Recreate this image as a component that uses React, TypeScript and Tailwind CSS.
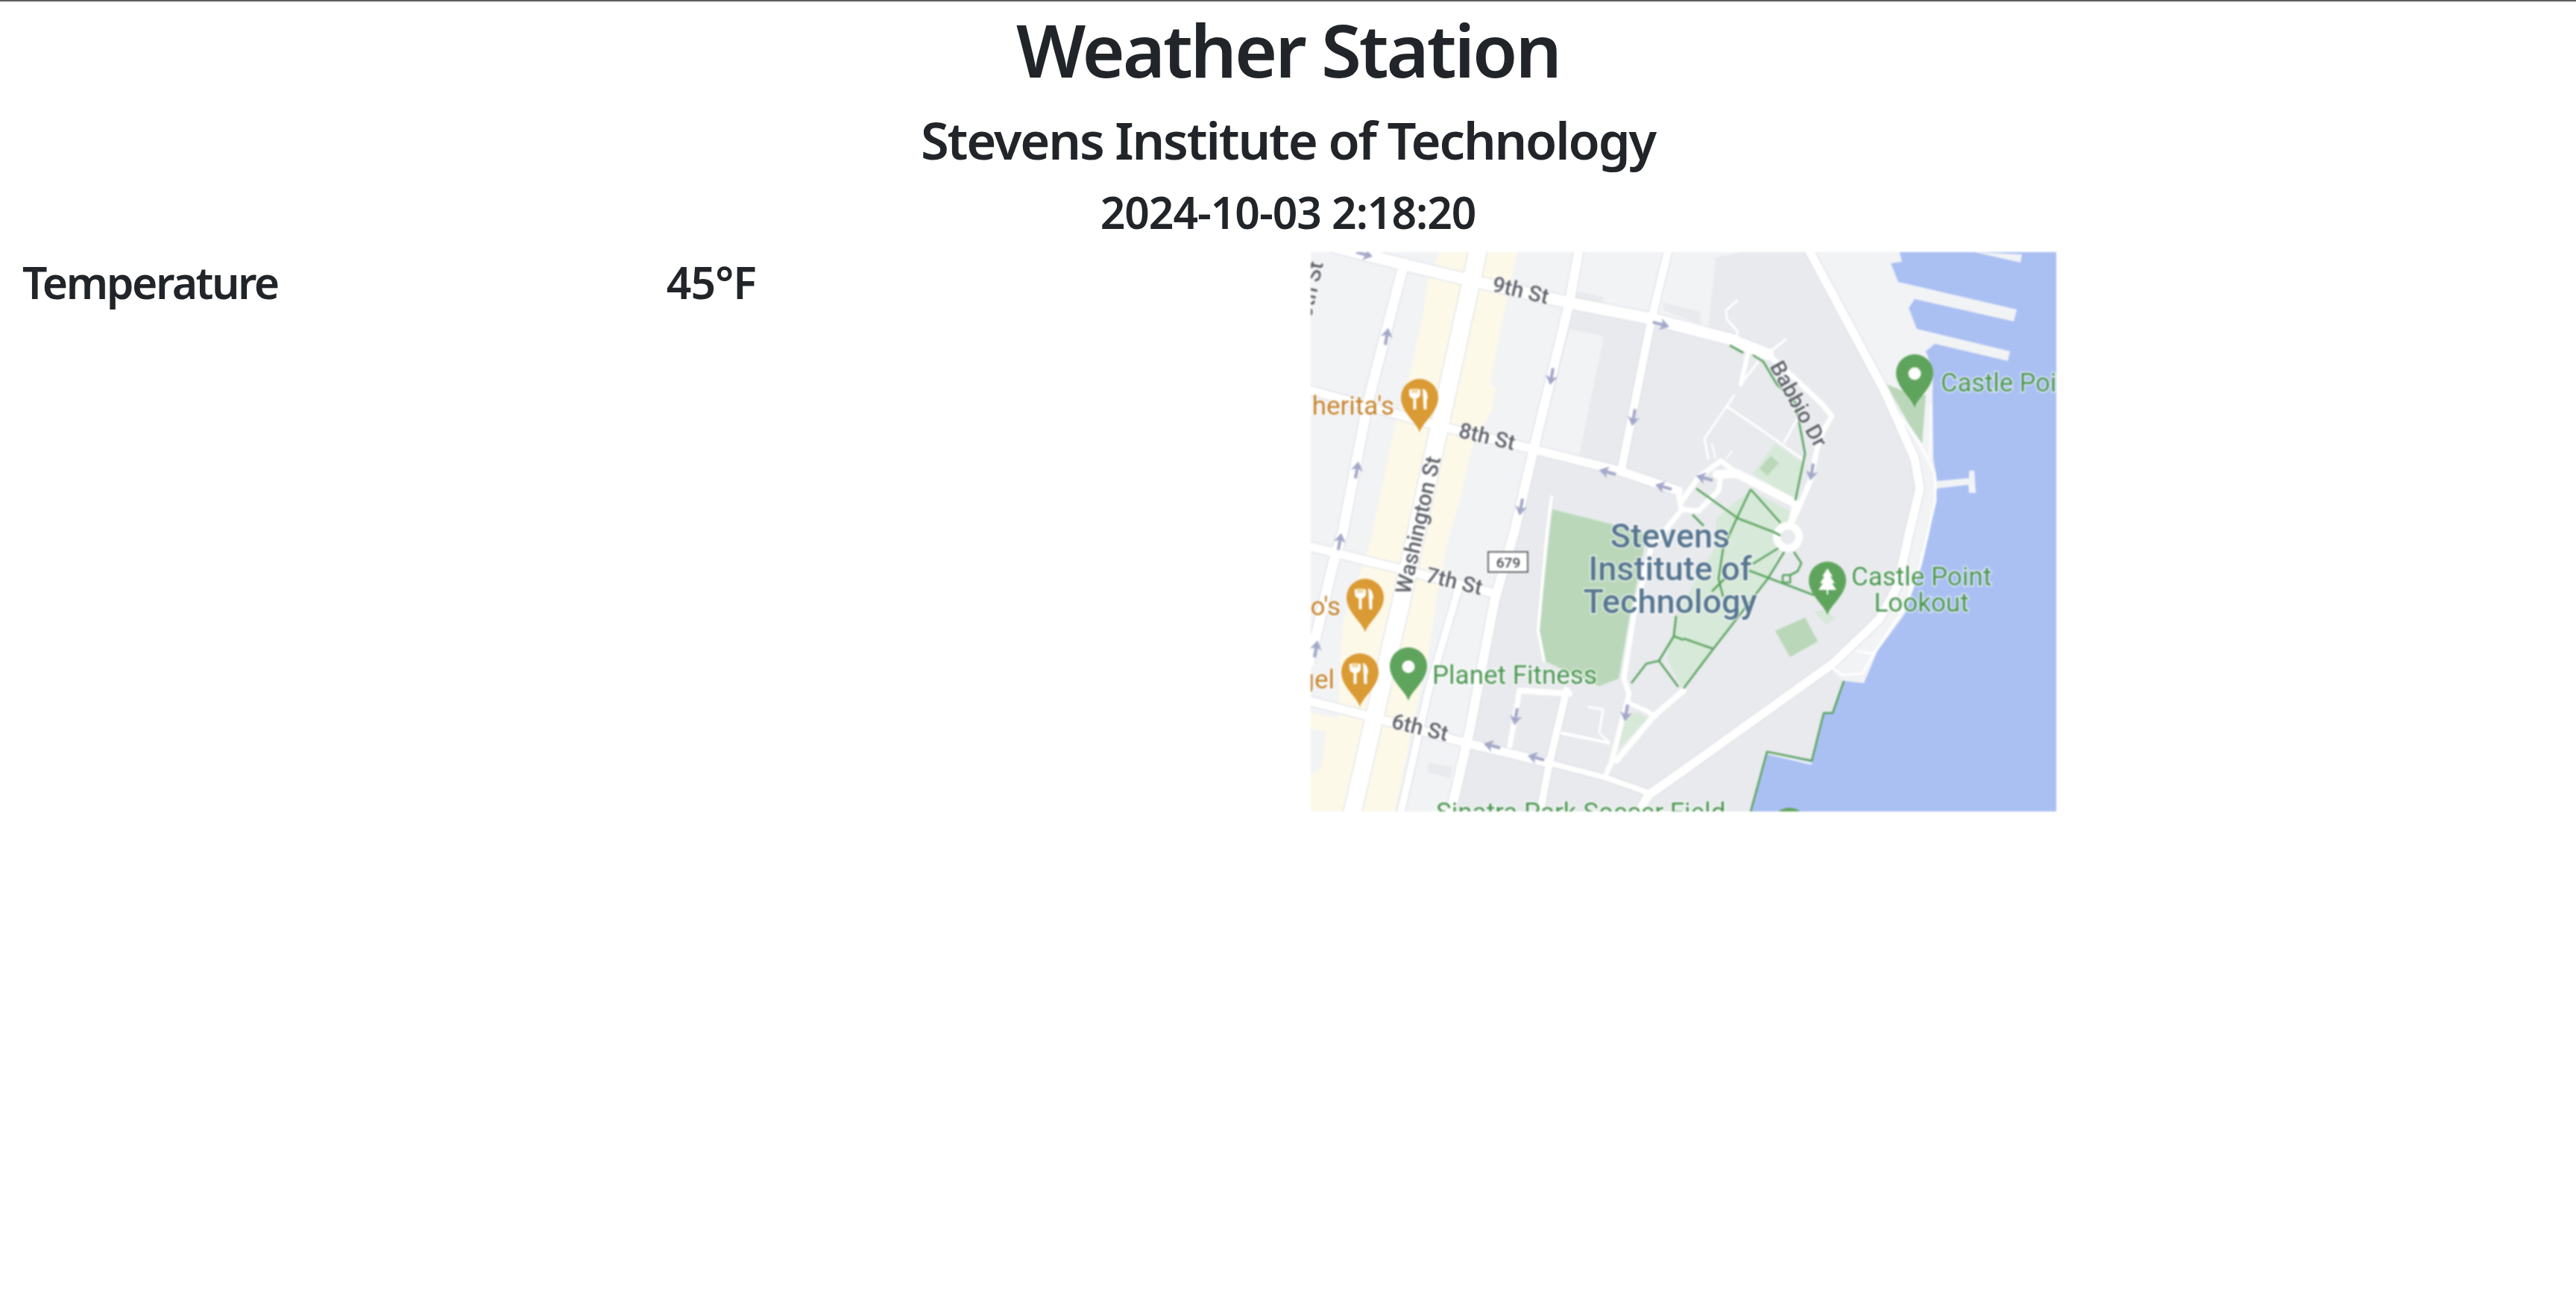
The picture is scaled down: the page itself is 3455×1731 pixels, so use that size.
const P = (pts: number[][]) => pts.map((p) => p.join(",")).join(" ");

const majorRoads: { w: number; p: number[][] }[] = [
  { w: 16, p: [[20, -10], [127, 17], [210, 37], [347, 68], [460, 90], [563, 117], [613, 137]] },
  { w: 24, p: [[225, -5], [120, 475], [55, 755]] },
  { w: 14, p: [[125, 15], [77, 200], [43, 375], [30, 418], [7, 515], [-2, 550]] },
  { w: 13, p: [[360, -5], [347, 67], [300, 260], [273, 375], [247, 465], [213, 642], [187, 755]] },
  { w: 11, p: [[480, -5], [457, 90], [417, 290]] },
  { w: 12, p: [[-5, 184], [160, 230], [293, 263], [413, 293], [493, 320]] },
  { w: 12, p: [[-5, 394], [120, 425], [247, 458]] },
  { w: 10, p: [[197, 455], [157, 592], [120, 755]] },
  { w: 12, p: [[-5, 601], [77, 622], [207, 658], [320, 685]] },
  { w: 8, p: [[320, 685], [397, 705], [453, 725]] },
  { w: 10, p: [[343, 588], [320, 685], [307, 755]] },
  { w: 12, p: [[667, -5], [770, 187], [810, 277], [817, 317], [803, 375], [787, 448], [763, 492], [700, 552], [500, 695], [453, 728], [438, 755]] },
];

const minorRoads: { w: number; p: number[][] }[] = [
  { w: 3, p: [[770, 192], [817, 257], [837, 297], [838, 333], [828, 375], [817, 422], [793, 482], [757, 535], [740, 565], [713, 567], [700, 558]] },
  { w: 3, p: [[733, 535], [753, 538]] },
  { w: 8, p: [[280, 588], [347, 592]] },
  { w: 7, p: [[280, 588], [267, 662]] },
  { w: 4, p: [[337, 645], [400, 658]] },
  { w: 3, p: [[373, 610], [392, 613], [387, 645], [400, 657]] },
  { w: 7, p: [[498, 345], [457, 395], [433, 488], [420, 572], [427, 592], [403, 685], [397, 698]] },
  { w: 8, p: [[500, 588], [460, 622], [410, 682]] },
  { w: 6, p: [[427, 605], [450, 615], [462, 623]] },
  { w: 4, p: [[323, 328], [317, 375], [305, 508], [313, 548]] },
  { w: 7, p: [[613, 137], [650, 170], [685, 203], [699, 220], [687, 240], [680, 260], [670, 307], [657, 337], [643, 367]] },
  { w: 3, p: [[637, 117], [617, 133]] },
  { w: 6, p: [[587, 133], [577, 177]] },
  { w: 3, p: [[577, 177], [600, 147]] },
  { w: 3, p: [[572, 65], [557, 78], [558, 90], [573, 107], [570, 115]] },
  { w: 3, p: [[568, 192], [528, 250], [533, 277]] },
  { w: 3, p: [[558, 207], [607, 240], [660, 278]] },
  { w: 3, p: [[653, 223], [635, 255]] },
  { w: 2, p: [[538, 257], [543, 277]] },
  { w: 2, p: [[565, 267], [557, 277]] },
  { w: 7, p: [[493, 322], [497, 335], [520, 302], [550, 280], [572, 297]] },
  { w: 7, p: [[550, 300], [547, 320], [520, 347], [497, 345], [493, 325]] },
  { w: 12, p: [[545, 298], [572, 297], [650, 337]] },
];

const footpaths: number[][][] = [
  [[562, 125], [580, 135]],
  [[593, 138], [607, 147], [625, 177], [650, 202], [663, 270], [650, 333]],
  [[517, 317], [573, 357], [620, 375], [630, 380]],
  [[590, 318], [630, 363]],
  [[590, 318], [570, 360], [553, 398], [547, 438], [553, 462]],
  [[512, 352], [527, 367]],
  [[627, 397], [593, 418]],
  [[635, 402], [613, 438], [540, 532], [500, 585]],
  [[648, 402], [658, 417], [653, 428], [643, 433]],
  [[588, 427], [675, 460]],
  [[633, 433], [643, 433], [643, 443], [633, 443], [633, 433]],
  [[500, 518], [540, 532]],
  [[538, 455], [555, 438]],
  [[490, 488], [487, 515], [467, 548], [493, 583]],
  [[467, 548], [450, 552], [430, 578]],
  [[487, 515], [500, 520]],
  [[715, 575], [700, 618], [688, 618], [672, 682], [612, 670], [590, 750]],
];

const arrows = [
  [72, 3, 15], [102, 113, -80], [62, 292, -80], [323, 167, 100], [282, 342, 100], [433, 222, 100], [470, 97, 15],
  [398, 295, 195], [473, 315, 195], [528, 303, 195], [672, 295, 100], [39, 388, -80], [7, 532, -80], [275, 623, 100],
  [243, 662, 195], [302, 678, 195], [423, 618, 100],
];

const Label = ({ x, y, r = 0, s, fill, w = 400, a = "start", children }: { x: number; y: number; r?: number; s: number; fill: string; w?: number; a?: "start" | "middle" | "end"; children: string }) => (
  <text
    transform={`translate(${x} ${y}) rotate(${r})`}
    fontFamily="Roboto, sans-serif"
    fontSize={s}
    fontWeight={w}
    fill={fill}
    stroke="#ffffff"
    strokeWidth={3}
    strokeOpacity={0.7}
    paintOrder="stroke"
    textAnchor={a}
  >
    {children}
  </text>
);

const Pin = ({ x, y, color, icon }: { x: number; y: number; color: string; icon: "dot" | "food" | "tree" }) => (
  <g transform={`translate(${x} ${y})`}>
    <path d="M0 47C-3 34-25 20-25 0A25 25 0 0 1 25 0C25 20 3 34 0 47Z" fill={color} />
    {icon === "dot" && <circle r="8.5" cy="1" fill="#ffffff" />}
    {icon === "food" && (
      <g>
        <path d="M-14 -11h15v7a7 7 0 0 1-5.5 5.5V16h-4V1.500a7 7 0 0 1-5.500-5.500z" fill="#ffffff" />
        <path d="M-11 -12h9v6h-9z" fill="#f1d9a6" />
        <path d="M4 -12c5 1 7 7 7 14H9.500V16H5.500z" fill="#ffffff" />
      </g>
    )}
    {icon === "tree" && (
      <g fill="#ffffff">
        <path d="M0 -16L7 -5H4L10 4H6L12 13H-12L-6 4H-10L-4 -5H-7Z" />
        <rect x="-1" y="13" width="2" height="6" />
      </g>
    )}
  </g>
);

const Arrow = ({ x, y, r }: { x: number; y: number; r: number }) => (
  <g transform={`translate(${x} ${y}) rotate(${r}) scale(1.15)`} fill="#a4a8c8">
    <rect x="-10" y="-1.800" width="13" height="3.600" />
    <path d="M-1 -7L10 0L-1 7L2 0Z" />
  </g>
);

function MapImage() {
  return (
    <svg viewBox="0 0 1000 750" className="block h-[750px] w-[1000px] blur-[0.8px]" role="img" aria-label="Map">
      <rect width="1000" height="750" fill="#f2f3f5" />
      <polygon
        points={P([[173, 0], [277, 0], [263, 63], [240, 177], [248, 182], [242, 213], [217, 260], [200, 333], [187, 375], [170, 458], [157, 542], [133, 652], [113, 750], [0, 750], [0, 618], [37, 625], [37, 592], [43, 498], [77, 398], [83, 375], [100, 293], [113, 233], [133, 163], [150, 90], [157, 37]])}
        fill="#fdf9e9"
      />
      <polygon points={P([[0, 640], [20, 642], [15, 690], [0, 700]])} fill="#f2f3f5" />
      <polygon
        points={P([[580, 0], [667, 0], [770, 187], [810, 277], [817, 317], [803, 375], [787, 448], [763, 492], [700, 552], [703, 565], [713, 575], [700, 618], [688, 618], [672, 682], [612, 670], [590, 750], [187, 750], [273, 375], [300, 263], [417, 290], [463, 90], [533, 105], [543, 7]])}
        fill="#e8eaed"
      />
      <polygon points={P([[350, 77], [453, 97], [413, 287], [308, 263]])} fill="#e8eaed" />
      <polygon points={P([[347, 103], [393, 113], [360, 273], [307, 263]])} fill="#f2f3f5" />
      <polygon points={P([[355, 52], [392, 60], [392, 67], [353, 62]])} fill="#e8eaed" />
      <polygon points={P([[473, 68], [523, 80], [523, 97], [473, 78]])} fill="#e8eaed" />
      <polygon points={P([[158, 685], [190, 690], [188, 705], [156, 698]])} fill="#e8eaed" />
      <polygon
        points={P([[790, 0], [793, 13], [778, 15], [788, 40], [947, 77], [943, 93], [810, 63], [802, 75], [813, 103], [938, 133], [935, 146], [837, 123], [825, 133], [835, 160], [834, 192], [835, 277], [840, 307], [883, 303], [883, 293], [890, 293], [892, 323], [883, 323], [882, 312], [840, 317], [830, 375], [820, 418], [797, 485], [760, 535], [742, 578], [715, 575], [700, 618], [688, 618], [672, 682], [612, 670], [590, 750], [1000, 750], [1000, 0]])}
        fill="#aac0f3"
      />
      <polygon points={P([[890, 0], [954, 3], [952, 14]])} fill="#f2f3f5" />
      <polyline points={P([[613, 672], [672, 686]])} stroke="#f2f3f5" strokeWidth="3" fill="none" />
      <polygon points={P([[324, 345], [445, 375], [447, 398], [427, 492], [413, 572], [387, 582], [313, 548], [305, 508]])} fill="#bad8b9" />
      <polygon points={P([[772, 177], [797, 187], [825, 192], [820, 257], [800, 227]])} fill="#bad8b9" />
      <polygon points={P([[623, 257], [660, 283], [650, 333], [593, 297]])} fill="#d7e9d8" />
      <polygon points={P([[617, 273], [628, 283], [612, 300], [602, 290]])} fill="#bad8b9" />
      <polygon points={P([[590, 320], [643, 347], [636, 385], [613, 438], [540, 532], [497, 584], [478, 545], [488, 490], [540, 400], [545, 357], [567, 337]])} fill="#d7e9d8" />
      <polygon points={P([[623, 508], [663, 490], [680, 522], [643, 543]])} fill="#bad8b9" />
      <polygon points={P([[675, 482], [693, 480], [702, 492], [692, 500]])} fill="#d7e9d8" />
      <polygon points={P([[437, 617], [453, 625], [413, 665], [420, 628]])} fill="#d7e9d8" />
      <g fill="none" stroke="#d9dbe4" strokeLinejoin="round">
        {majorRoads.map((r, i) => (
          <polyline key={i} points={P(r.p)} strokeWidth={r.w + 2} />
        ))}
      </g>
      <g fill="none" stroke="#ffffff" strokeLinejoin="round" strokeLinecap="round">
        {majorRoads.map((r, i) => (
          <polyline key={i} points={P(r.p)} strokeWidth={r.w} />
        ))}
        {minorRoads.map((r, i) => (
          <polyline key={i} points={P(r.p)} strokeWidth={r.w} />
        ))}
        <polyline points={P([[640, 382], [650, 337]])} strokeWidth="8" />
        <polyline points={P([[832, 205], [830, 277]])} strokeWidth="2" />
      </g>
      <circle cx="640" cy="382" r="15" fill="#e8eaed" stroke="#ffffff" strokeWidth="10" />
      <g fill="none" stroke="#5aa35f" strokeWidth="2.600" strokeLinejoin="round">
        {footpaths.map((p, i) => (
          <polyline key={i} points={P(p)} />
        ))}
      </g>
      {arrows.map((a, i) => (
        <Arrow key={i} x={a[0]} y={a[1]} r={a[2]} />
      ))}
      <rect x="238" y="402" width="53" height="27" fill="#ffffff" stroke="#63666c" strokeWidth="2" />
      <text x="265" y="423" textAnchor="middle" fontFamily="Roboto, sans-serif" fontSize="19" fontWeight="500" fill="#4a4d52">679</text>
      <Label x={242} y={52} r={13.400} s={29} w={500} fill="#5f6269">9th St</Label>
      <Label x={197} y={248} r={13.400} s={29} w={500} fill="#5f6269">8th St</Label>
      <Label x={153} y={442} r={13.400} s={29} w={500} fill="#5f6269">7th St</Label>
      <Label x={107} y={638} r={13.400} s={29} w={500} fill="#5f6269">6th St</Label>
      <Label x={133} y={460} r={-77.300} s={29} w={500} fill="#5f6269">Washington St</Label>
      <Label x={615} y={153} r={61} s={29} w={500} fill="#5f6269">Babbio Dr</Label>
      <Label x={17} y={15} r={-77.300} s={29} w={500} a="end" fill="#5f6269">10th St</Label>
      <Label x={482} y={396} a="middle" s={45} w={500} fill="#567590">Stevens</Label>
      <Label x={482} y={440} a="middle" s={45} w={500} fill="#567590">Institute of</Label>
      <Label x={482} y={484} a="middle" s={45} w={500} fill="#567590">Technology</Label>
      <Label x={845} y={187} s={34.500} fill="#4a9650">Castle Point</Label>
      <Label x={819} y={447} a="middle" s={35} fill="#4a9650">Castle Point</Label>
      <Label x={819} y={482} a="middle" s={35} fill="#4a9650">Lookout</Label>
      <Label x={163} y={579} s={35} fill="#4a9650">Planet Fitness</Label>
      <Label x={168} y={763} s={35} fill="#4a9650">Sinatra Park Soccer Field</Label>
      <Label x={112} y={218} a="end" s={35} fill="#c5832e">Margherita's</Label>
      <Label x={40} y={487} a="end" s={35} fill="#c5832e">Leo's</Label>
      <Label x={32} y={585} a="end" s={35} fill="#c5832e">Bagel</Label>
      <Pin x={810} y={162} color="#5fa45c" icon="dot" />
      <Pin x={693} y={440} color="#5fa45c" icon="tree" />
      <Pin x={131} y={555} color="#5fa45c" icon="dot" />
      <Pin x={146} y={195} color="#da9a34" icon="food" />
      <Pin x={73} y={463} color="#da9a34" icon="food" />
      <Pin x={66} y={563} color="#da9a34" icon="food" />
      <Pin x={642} y={770} color="#5fa45c" icon="dot" />
    </svg>
  );
}

export default function App() {
  return (
    <div className="min-h-[1731px] border-t-2 border-[#5f5f5f] bg-white font-['Noto_Sans',sans-serif] font-semibold text-[#212529]">
      <div className="pt-1 text-center">
        <h1 className="mb-5 text-[98px] leading-[120px] tracking-[-3.1px]">Weather Station</h1>
        <h2 className="mb-[18px] text-[68.6px] leading-[84px] tracking-[-2.15px]">Stevens Institute of Technology</h2>
        <h3 className="text-[58.8px] leading-[72px] tracking-[-1.05px]">2024-10-03 2:18:20</h3>
      </div>
      <div className="mt-[18px] grid grid-cols-4">
        <div className="px-[30px] pt-1 text-[58.8px] leading-[72px] tracking-[-2.5px]">Temperature</div>
        <div className="px-[30px] pt-1 text-[58.8px] leading-[72px] tracking-[-0.9px]">45°F</div>
        <div className="col-span-2 px-[30px]">
          <MapImage />
        </div>
      </div>
    </div>
  );
}
